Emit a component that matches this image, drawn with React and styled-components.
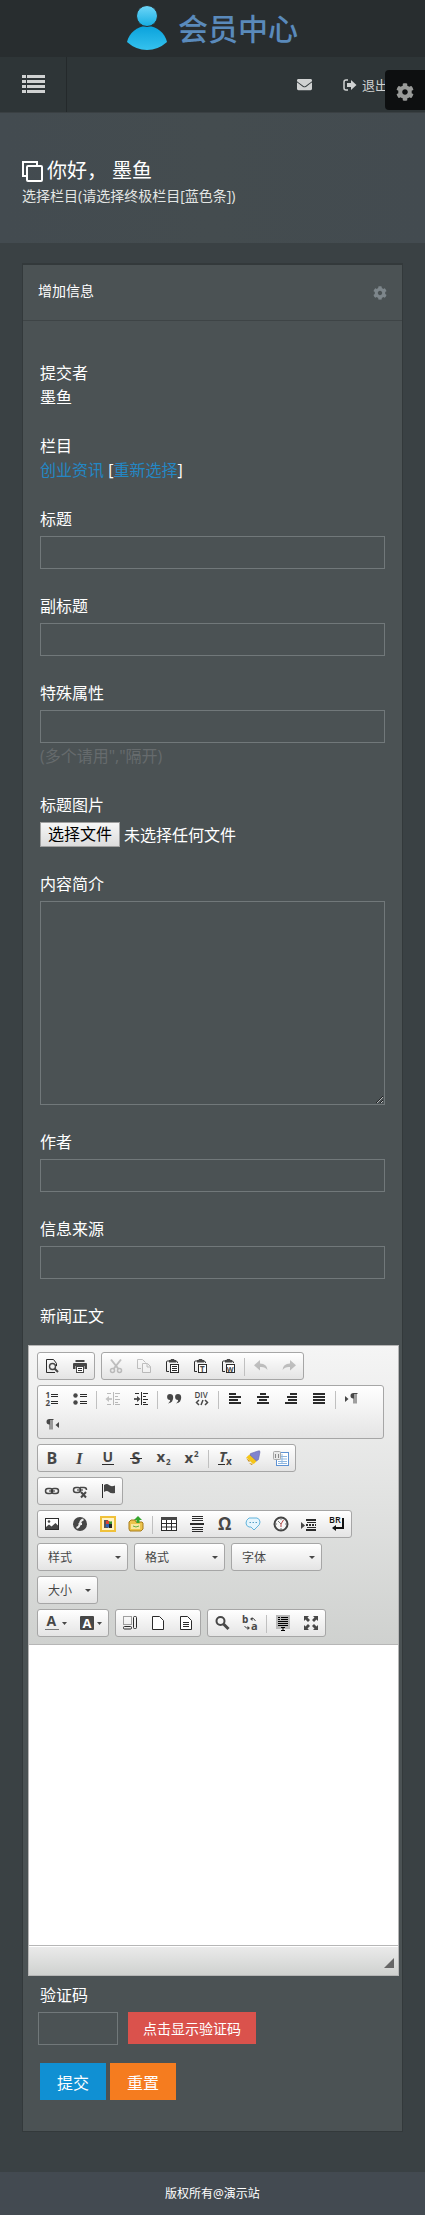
import React from 'react';
import styled, { createGlobalStyle } from 'styled-components';
import { FaCog, FaEnvelope } from 'react-icons/fa';

const GlobalStyle = createGlobalStyle`
  * {
    box-sizing: border-box;
  }
  body {
    margin: 0;
    background: #3a4144;
    color: #fff;
    font-family: "Open Sans", "Noto Sans CJK SC", sans-serif;
    font-size: 16px;
    line-height: 24px;
  }
  button, input, select, textarea {
    font-family: inherit;
    margin: 0;
  }
  svg {
    display: block;
    overflow: visible;
  }
`;

const Page = styled.div`
  position: relative;
`;

const LogoBar = styled.header`
  height: 57px;
  background: #282d2f;
  display: flex;
  justify-content: center;
`;

const LogoLink = styled.a`
  display: flex;
  align-items: center;
  gap: 11px;
  color: #5a8abb;
  font-size: 30px;
  line-height: 44px;
  font-weight: 500;
  text-decoration: none;
`;

const NavBar = styled.nav`
  height: 56px;
  background: #2e3537;
  border-bottom: 1px solid #3a4043;
  display: flex;
  align-items: stretch;
`;

const MenuButton = styled.button`
  width: 67px;
  padding: 0 0 2px;
  border: none;
  border-right: 1px solid #24292b;
  background: none;
  color: #d0d2d2;
  display: flex;
  align-items: center;
  justify-content: center;
`;

const NavLinks = styled.div`
  margin-left: auto;
  padding-right: 37px;
  display: flex;
  gap: 31px;
`;

const NavLink = styled.a`
  display: flex;
  align-items: center;
  gap: 5px;
  color: #d0d2d2;
  font-size: 13px;
  text-decoration: none;
`;

const SettingsButton = styled.button`
  position: absolute;
  top: 70px;
  right: 0;
  width: 40px;
  height: 40px;
  padding: 4px 0 0;
  border: none;
  border-radius: 4px 0 0 4px;
  background: #0d0f10;
  color: #999b99;
  display: flex;
  align-items: center;
  justify-content: center;
`;

const Hero = styled.section`
  height: 130px;
  padding: 44px 22px 0;
  background: linear-gradient(90deg, #434b50, #444c4f 50%, #434b50);
`;

const Greeting = styled.h2`
  margin: 0;
  display: flex;
  align-items: center;
  gap: 4px;
  font-size: 20px;
  line-height: 28px;
  font-weight: 400;
`;

const GreetingName = styled.span`
  margin-left: 1px;
`;

const Hint = styled.p`
  margin: 0;
  color: #e3e6e4;
  font-size: 14px;
  line-height: 22px;
`;

const Card = styled.main`
  margin: 20px 22px 40px;
  border: 1px solid #33393b;
  border-top-width: 2px;
  background: #4b5254;
`;

const CardHeader = styled.div`
  height: 56px;
  padding: 0 15px;
  border-bottom: 1px solid #3e4446;
  display: flex;
  align-items: center;
  justify-content: space-between;
  color: #7d868b;
`;

const CardTitle = styled.h3`
  margin: 0;
  padding-bottom: 4px;
  color: #fff;
  font-size: 14px;
  font-weight: 400;
`;

const Form = styled.form`
  padding: 40px 0 31px;
`;

const Field = styled.div`
  margin: 0 17px 25px;
`;

const Label = styled.label`
  display: block;
  margin-bottom: ${(props) => (props.$tight ? 0 : 5)}px;
`;

const BlueLink = styled.a`
  color: #2487c4;
  text-decoration: none;
`;

const TextInput = styled.input`
  display: block;
  width: ${(props) => (props.$small ? '80px' : '100%')};
  height: 33px;
  padding: 4px 8px;
  border: 1px solid #71787a;
  background: transparent;
  color: #fff;
`;

const TextArea = styled.textarea`
  display: block;
  width: 100%;
  height: 204px;
  padding: 4px 8px;
  border: 1px solid #71787a;
  background: transparent;
  color: #fff;
  resize: both;
`;

const Help = styled.div`
  padding-top: 1px;
  color: #666b6d;
`;

const FileRow = styled.div`
  display: flex;
  align-items: center;
  gap: 4px;
`;

const FileButton = styled.label`
  height: 25px;
  padding: 0 7px;
  border: 1px solid #a0a0a0;
  background: linear-gradient(#f6f6f6, #dcdcdc);
  color: #000;
  line-height: 23px;
`;

const HiddenFile = styled.input`
  position: absolute;
  width: 1px;
  height: 1px;
  opacity: 0;
`;

const EditorLabel = styled.label`
  display: block;
  margin: 0 17px;
`;

const Editor = styled.div`
  margin: 17px 3px 7px 5px;
  border: 1px solid #b6b6b6;
`;

const Toolbar = styled.div`
  padding: 6px 8px 2px;
  border-bottom: 1px solid #b6b6b6;
  background: linear-gradient(#f5f5f5, #cfd1cf);
`;

const ToolRow = styled.div`
  display: flex;
  flex-wrap: wrap;
`;

const ToolGroup = styled.div`
  max-width: calc(100% - 6px);
  margin: 0 6px 5px 0;
  border: 1px solid #a6a6a6;
  border-radius: 3px;
  background: linear-gradient(#fff, #e4e4e4);
  display: flex;
  flex-wrap: wrap;
`;

const ToolButton = styled.button`
  height: 26px;
  padding: 0 6px;
  border: none;
  background: none;
  display: flex;
  align-items: center;
  gap: 2px;
  opacity: ${(props) => (props.disabled ? 0.3 : 1)};
`;

const Separator = styled.span`
  width: 1px;
  height: 18px;
  margin: 5px 2px 3px;
  background: #c0c0c0;
`;

const Combo = styled.div`
  width: ${(props) => props.$width}px;
  height: 28px;
  margin: 0 6px 5px 0;
  border: 1px solid #a6a6a6;
  border-radius: 3px;
  background: linear-gradient(#fff, #e4e4e4);
  display: grid;
  align-items: center;
  &::after {
    content: '';
    grid-area: 1 / 1;
    justify-self: end;
    margin-right: 6px;
    border: 3px solid transparent;
    border-top-color: #474747;
    border-bottom-width: 0;
    pointer-events: none;
  }
`;

const ComboSelect = styled.select`
  grid-area: 1 / 1;
  width: 100%;
  height: 26px;
  padding: 0 0 0 10px;
  border: none;
  background: transparent;
  color: #474747;
  font-size: 12px;
  appearance: none;
`;

const EditorBody = styled.textarea`
  display: block;
  width: 100%;
  height: 300px;
  padding: 8px;
  border: none;
  background: #fff;
  color: #333;
  resize: none;
`;

const EditorFooter = styled.div`
  height: 30px;
  padding: 0 4px 7px;
  border-top: 1px solid #b6b6b6;
  box-shadow: inset 0 1px 0 #fff;
  background: linear-gradient(#ebebeb, #cfd1cf);
  display: flex;
  align-items: flex-end;
  justify-content: flex-end;
`;

const CaptchaField = styled.div`
  margin: 0 15px 18px;
`;

const CaptchaLabel = styled.label`
  display: block;
  margin: 0 2px 5px;
`;

const ButtonRow = styled.div`
  display: flex;
  align-items: flex-start;
  gap: ${(props) => props.$gap}px;
`;

const CaptchaButton = styled.button`
  height: 32px;
  padding: 0 15px;
  border: none;
  background: #da524c;
  color: #fff;
  font-size: 14px;
`;

const ActionButton = styled.button`
  height: 37px;
  padding: 0 17px;
  border: none;
  background: ${(props) => props.$color};
  color: #fff;
  font-size: 16px;
`;

const Actions = styled.div`
  margin: 0 17px;
`;

const Footer = styled.footer`
  height: 43px;
  background: #434a51;
  text-align: center;
  font-size: 12px;
  line-height: 43px;
`;

const ink = '#474747';

const line = (d, width = 1, color = '#2b2b2b') => (
  <path d={d} fill='none' stroke={color} strokeWidth={width} />
);

const letter = (text, x, y, size, extra) => (
  <text x={x} y={y} fontSize={size} fontWeight='700' fontFamily='"Open Sans", sans-serif' fill={ink} {...extra}>{text}</text>
);

const pasteBoard = (
  <>
    {line('M5 3H3.5Q2.5 3 2.5 4V13.5H5M11 3H12Q13.5 3 13.5 5')}
    <path d='M5 2H6.5L7 1H10L10.5 2H12V4.5H5Z' fill={ink} />
    <rect x='6.5' y='6.5' width='8' height='8' fill='#fff' stroke='#2b2b2b' />
  </>
);

const icons = {
  preview: (
    <>
      {line('M12.5 8V5.5L9.5 1.5H2.5V14.5H11')}
      <circle cx='8.5' cy='8.5' r='3' fill='none' stroke={ink} strokeWidth='1.4' />
      {line('M10.5 10.5L14 14', 2, ink)}
    </>
  ),
  print: (
    <>
      <path d='M3.5 2H12.5V4H3.5ZM1 6Q1 5 2 5H14Q15 5 15 6V11H12.5V8H3.5V11H1Z' fill={ink} />
      <rect x='4.5' y='8.5' width='7' height='6' fill='#fff' stroke={ink} />
      {line('M6 10.5H10M6 12.5H10')}
    </>
  ),
  cut: (
    <>
      {line('M3 1.5L10.5 11M13 1.5L5.5 11', 2, ink)}
      <circle cx='4.5' cy='12.5' r='2' fill='none' stroke={ink} strokeWidth='1.5' />
      <circle cx='11.5' cy='12.5' r='2' fill='none' stroke={ink} strokeWidth='1.5' />
    </>
  ),
  copy: (
    <>
      {line('M5 10.5H1.5V1.5H6.5L9.5 4.5', 1, ink)}
      <path d='M6.5 5.5H11.5L14.5 8.5V14.5H6.5ZM11 5.5V9H14.5' fill='#fff' stroke={ink} />
    </>
  ),
  paste: <>{pasteBoard}{line('M8 8.5H13M8 10.5H13M8 12.5H13')}</>,
  pasteText: <>{pasteBoard}{letter('T', 8, 13.5, 8)}</>,
  pasteWord: <>{pasteBoard}{letter('W', 6.8, 13.5, 7)}</>,
  undo: <path d='M7 2V5.5Q14 5.5 14.5 12Q12 8.5 7 9V12.5L1 7.2Z' fill={ink} />,
  redo: <path d='M9 2V5.5Q2 5.5 1.5 12Q4 8.5 9 9V12.5L15 7.2Z' fill={ink} />,
  ordered: (
    <>
      {letter('1', 1.5, 7, 8)}
      {letter('2', 1.5, 14.5, 8)}
      {line('M7 3.5H14M7 5.5H14M7 10.5H14M7 12.5H14')}
    </>
  ),
  bullets: (
    <>
      <circle cx='3.5' cy='4.5' r='2.2' fill={ink} />
      <circle cx='3.5' cy='11.5' r='2.2' fill={ink} />
      {line('M8 3.5H15M8 5.5H15M8 10.5H15M8 12.5H15')}
    </>
  ),
  outdent: (
    <>
      {line('M8.5 1V14M10 2.5H15M10 5.5H13M10 8.5H15M10 11.5H13M10 13.5H15M2 2.5H6M2 13.5H6')}
      {line('M2 8H7', 1.5)}
      <path d='M0.5 8L4 5V11Z' fill={ink} />
    </>
  ),
  indent: (
    <>
      {line('M8.5 1V14M10 2.5H15M10 5.5H13M10 8.5H15M10 11.5H13M10 13.5H15M2 2.5H6M2 13.5H6')}
      {line('M1 8H5', 1.5)}
      <path d='M7.5 8L4 5V11Z' fill={ink} />
    </>
  ),
  quote: (
    <path
      d='M4 3A3 3 0 1 0 4.2 9Q4 11 2 12.5Q7.5 11.5 7.2 6Q7 3 4 3ZM12 3A3 3 0 1 0 12.2 9Q12 11 10 12.5Q15.5 11.5 15.2 6Q15 3 12 3Z'
      fill={ink}
    />
  ),
  div: (
    <>
      {letter('DIV', 0.5, 7, 8, { fontWeight: 600 })}
      {line('M5 9L2.5 11.5L5 14M11 9L13.5 11.5L11 14M9 9L7 14', 1.5, ink)}
    </>
  ),
  left: line('M2 3H9M2 6H14M2 9H11M2 12H14', 2),
  center: line('M5 3H11M2 6H14M4 9H12M2 12H14', 2),
  right: line('M7 3H14M4 6H14M5 9H14M2 12H14', 2),
  justify: line('M2 3H14M2 6H14M2 9H14M2 12H14', 2),
  ltr: (
    <>
      <path d='M1 5L4.5 8L1 11Z' fill={ink} />
      <path d='M13.5 2H9.5Q6.5 2 6.5 4.8T9.5 7.5V12.5H10.5V3H11.5V12.5H12.5V3H13.5Z' fill={ink} />
    </>
  ),
  rtl: (
    <>
      <path d='M15 5L11.5 8L15 11Z' fill={ink} />
      <path d='M9.5 2H5.5Q2.5 2 2.5 4.8T5.5 7.5V12.5H6.5V3H7.5V12.5H8.5V3H9.5Z' fill={ink} />
    </>
  ),
  bold: letter('B', 2.5, 14, 16),
  italic: letter('I', 4, 14, 17, { fontStyle: 'italic', fontFamily: '"Liberation Serif", serif' }),
  underline: <>{letter('U', 2.5, 12, 14)}{line('M2 14.5H14')}</>,
  strike: <>{letter('S', 3.5, 14, 16)}{line('M2 8.5H14')}</>,
  sub: <>{letter('x', 0.5, 12, 15)}{letter('2', 10, 15, 8)}</>,
  sup: <>{letter('x', 0.5, 13, 15)}{letter('2', 10, 7, 8)}</>,
  removeFormat: (
    <>
      {letter('T', 2, 12, 14, { fontStyle: 'italic' })}
      {letter('x', 9, 15, 10)}
      {line('M1 14.5H8')}
    </>
  ),
  brush: (
    <>
      <path d='M2 8L8 14Q11 13 12 10L6 4Q3 5 1 8Z' fill='#f5c518' />
      <path d='M1 8L4 12L5 11M4 13L6.5 15L8 14' fill='#c78a10' />
      <path d='M5.5 3.5L13 1Q15 0 15 2L13.5 9.5L11.5 11L5 5Z' fill='#8083cf' stroke='#5c5eab' strokeWidth='0.5' />
    </>
  ),
  template: (
    <>
      <rect x='3.5' y='2.5' width='12' height='13' fill='#fff' stroke='#5e92d3' />
      {line('M5 6.5H14M5 9H14M5 11.5H14M5 13.5H14M9 4V14', 1, '#8fb7e0')}
      <rect x='0.5' y='1.5' width='7' height='8' rx='1' fill='#e9e9e9' stroke='#aaa' />
      {line('M2.5 4V8M5.5 4V8', 1, '#888')}
    </>
  ),
  link: (
    <>
      <rect x='1.5' y='5.5' width='7' height='5' rx='2.5' fill='none' stroke={ink} strokeWidth='1.5' />
      <rect x='7.5' y='5.5' width='7' height='5' rx='2.5' fill='none' stroke={ink} strokeWidth='1.5' />
      {line('M5 8H11', 1)}
    </>
  ),
  unlink: (
    <>
      <rect x='1.5' y='4.5' width='7' height='5' rx='2.5' fill='none' stroke={ink} strokeWidth='1.5' />
      <path d='M8 4.5H12Q14.5 4.5 14.5 7' fill='none' stroke={ink} strokeWidth='1.5' />
      {line('M5 7H11', 1)}
      {line('M9 9L14 14.5M14 9L9 14.5', 2, ink)}
    </>
  ),
  anchor: (
    <>
      {line('M2.5 1V15', 1)}
      <path d='M4 2Q7 0 9 2T15 2.5V10Q11 11 9 9T4 9Z' fill={ink} />
    </>
  ),
  image: (
    <>
      <rect x='1.5' y='2.5' width='13' height='11' fill='#fff' stroke='#2b2b2b' />
      <circle cx='5' cy='5.5' r='1.3' fill={ink} />
      <path d='M2 13V11L5 8.5L7.5 10.5L11.5 7L14 9.5V13Z' fill={ink} />
    </>
  ),
  flash: (
    <>
      <circle cx='8' cy='8' r='7' fill={ink} />
      {line('M11.5 3.5Q8.5 4 8 7.5T4.5 12M6.5 8H10', 2, '#eee')}
    </>
  ),
  media: (
    <>
      <rect x='1' y='1' width='14' height='14' fill='#fff3c4' stroke='#f0c13a' strokeWidth='2' />
      <rect x='4' y='4' width='4' height='8' fill='#555' />
      <path d='M6 5Q8 4 9 5V8H6Z' fill='#d43' />
      <path d='M9 5Q11 6 12 5V8H9Z' fill='#3a9a30' />
      <path d='M6 8H9V12Q8 11 6 11Z' fill='#2b62b8' />
      <path d='M9 8H12V12H9Z' fill='#222' />
    </>
  ),
  upload: (
    <>
      <path d='M1 6L3 4H7L8 6H14L15 7V13L13 15H2L1 13Z' fill='#ecc34c' stroke='#a97c1b' />
      <rect x='3' y='8' width='9' height='5' fill='#f9e7a0' />
      <path d='M10 0L14 4H11.5V7H8.5V4H6Z' fill='#35a52d' />
      {line('M5 10Q8 12 11 10', 1, '#65ae46')}
    </>
  ),
  table: (
    <>
      <rect x='0.5' y='1.5' width='15' height='13' fill='#fff' stroke='#2b2b2b' />
      <path d='M0 1H16V4H0Z' fill={ink} />
      {line('M5.5 4V14M10.5 4V14M1 7.5H15M1 11H15')}
    </>
  ),
  rule: <>{line('M3 0.5H14M3 2.5H14M3 4.5H14M3 11.5H14M3 13.5H14M3 15.5H14')}{line('M1 8H15', 2)}</>,
  omega: letter('Ω', 1, 14, 17),
  bubble: (
    <>
      <path d='M4 2H12Q15 3 15 6T12 11L9 14L6 11H4Q1 10 1 7T4 2Z' fill='#e5f5fd' stroke='#62b4dc' />
      {line('M4.5 6.5H6M7.5 6.5H9M10.5 6.5H12', 1, '#559fc5')}
    </>
  ),
  clock: (
    <>
      <circle cx='8' cy='8' r='6.5' fill='#f6f6f6' stroke='#444' strokeWidth='2' />
      {line('M8 2V4M8 12V14M2 8H4M12 8H14M5 5L8 8', 1, '#777')}
      {line('M10.5 4L8 8V11', 1, '#b44')}
    </>
  ),
  pageBreak: (
    <>
      <path d='M0 6L4 9.5L0 13Z' fill={ink} />
      {line('M5 4H15M5 14H15', 2)}
      {line('M6 6.5H15M6 11.5H15')}
      <path d='M5 9H15' stroke='#2b2b2b' strokeWidth='2' strokeDasharray='2 1' />
    </>
  ),
  br: (
    <>
      {letter('BR', 0, 7, 9, { fontWeight: 600, fill: '#111' })}
      {line('M14 2V12H6', 2, '#111')}
      <path d='M3 12L7 9V15Z' fill='#111' />
    </>
  ),
  textColor: <>{letter('A', 2.5, 11, 14)}{line('M1 14.5H15', 1, '#777')}</>,
  bgColor: <><rect x='1' y='1' width='14' height='14' rx='1' fill={ink} />{letter('A', 3.5, 13, 13, { fill: '#fff' })}</>,
  blocks: (
    <>
      <path d='M1.5 1.5H9.5V9.5H1.5Z' fill='none' stroke={ink} strokeDasharray='1 1' />
      <rect x='11.5' y='1.5' width='3' height='12' rx='1' fill='none' stroke='#2b2b2b' />
      <rect x='1.5' y='11.5' width='8' height='2.5' rx='1' fill='none' stroke='#2b2b2b' />
    </>
  ),
  newPage: <path d='M2.5 1.5H9.5L13.5 5.5V14.5H2.5Z' fill='#fff' stroke='#2b2b2b' />,
  source: (
    <>
      <path d='M2.5 1.5H9.5L13.5 5.5V14.5H2.5Z' fill='#fff' stroke='#2b2b2b' />
      {line('M5 7.5H11M5 9.5H11M5 11.5H11')}
    </>
  ),
  find: <><circle cx='6.5' cy='6' r='4' fill='none' stroke={ink} strokeWidth='2' />{line('M9.5 9L14.5 14', 3, ink)}</>,
  replace: (
    <>
      {letter('b', 0, 8, 10)}
      {letter('a', 9, 15, 11)}
      {line('M9 3.5Q12 2.5 13.5 6M7 13Q4 14 2.5 11', 1, ink)}
      <path d='M8 4L10.5 2V6ZM8 13L5.5 11V15Z' fill={ink} />
    </>
  ),
  selectAll: (
    <>
      <path d='M1 0H15V14H1Z' fill='#b9b9b9' />
      {line('M3 2.5H5M6 2.5H13M3 4.5H5M6 4.5H13M3 6.5H13M3 8.5H13M3 10.5H13', 1, '#000')}
      {line('M6 12.5H10M8 12.5V15M6 15.5H10', 1, '#000')}
    </>
  ),
  maximize: (
    <path
      d='M1 1H6L4.5 2.5L7 5L5 7L2.5 4.5L1 6ZM15 1H10L11.5 2.5L9 5L11 7L13.5 4.5L15 6ZM1 15H6L4.5 13.5L7 11L5 9L2.5 11.5L1 10ZM15 15H10L11.5 13.5L9 11L11 9L13.5 11.5L15 10Z'
      fill={ink}
    />
  ),
};

// '|' draws a separator inside a group
const firstTools = [
  [['preview', '预览'], ['print', '打印']],
  [['cut', '剪切', true], ['copy', '复制', true], ['paste', '粘贴'], ['pasteText', '粘贴为无格式文本'], ['pasteWord', '从 MS Word 粘贴'], '|', ['undo', '撤消', true], ['redo', '重做', true]],
  [['ordered', '编号列表'], ['bullets', '项目列表'], '|', ['outdent', '减少缩进量', true], ['indent', '增加缩进量'], '|', ['quote', '块引用'], ['div', '创建 DIV 容器'], '|', ['left', '左对齐'], ['center', '居中'], ['right', '右对齐'], ['justify', '两端对齐'], '|', ['ltr', '文字方向为从左至右'], ['rtl', '文字方向为从右至左']],
  [['bold', '加粗'], ['italic', '倾斜'], ['underline', '下划线'], ['strike', '删除线'], ['sub', '下标'], ['sup', '上标'], '|', ['removeFormat', '清除格式'], ['brush', '格式刷'], ['template', '模板']],
  [['link', '插入超链接'], ['unlink', '取消超链接'], ['anchor', '锚点']],
  [['image', '图像'], ['flash', 'Flash'], ['media', '多媒体'], ['upload', '附件'], '|', ['table', '表格'], ['rule', '水平线'], ['omega', '特殊符号'], ['bubble', '表情'], ['clock', '时间'], ['pageBreak', '分页符'], ['br', '换行']],
];

const lastTools = [
  [['textColor', '文本颜色', false, true], ['bgColor', '背景颜色', false, true]],
  [['blocks', '显示区块'], ['newPage', '新建'], ['source', '源码']],
  [['find', '查找'], ['replace', '替换'], '|', ['selectAll', '全选'], ['maximize', '全屏']],
];

const combos = [['样式', 91], ['格式', 91], ['字体', 91], ['大小', 61]];

function Tools ({ groups }) {
  return groups.map((group, index) => (
    <ToolGroup key={index}>
      {group.map((item, i) => {
        if (item === '|') return <Separator key={i} />;
        const [name, title, disabled, arrow] = item;
        return (
          <ToolButton key={name} type='button' aria-label={title} disabled={disabled}>
            <svg width='16' height='16' viewBox='0 0 16 16'>{icons[name]}</svg>
            {arrow && <svg width='5' height='3' viewBox='0 0 5 3'><path d='M0 0H5L2.5 3Z' fill={ink} /></svg>}
          </ToolButton>
        );
      })}
    </ToolGroup>
  ));
}

function LogoIcon () {
  return (
    <svg width='40' height='44' viewBox='0 0 40 44'>
      <defs>
        <linearGradient id='head' x1='0' y1='0' x2='0' y2='1'>
          <stop offset='0' stopColor='#6fd6f8' />
          <stop offset='1' stopColor='#14ade2' />
        </linearGradient>
        <linearGradient id='body' x1='0' y1='0' x2='0' y2='1'>
          <stop offset='0' stopColor='#0aa2dc' />
          <stop offset='1' stopColor='#35c2ee' />
        </linearGradient>
      </defs>
      <path d='M20 19C30 19 38 26 40 35Q31 43 20 43T0 35C2 26 10 19 20 19Z' fill='url(#body)' />
      <circle cx='20' cy='9' r='10.5' fill='url(#head)' stroke='#282d2f' strokeWidth='1' />
    </svg>
  );
}

function App () {
  return (
    <Page>
      <GlobalStyle />
      <LogoBar>
        <LogoLink href='#home'><LogoIcon />会员中心</LogoLink>
      </LogoBar>
      <NavBar>
        <MenuButton type='button' aria-label='菜单'>
          <svg width='23' height='18' viewBox='0 0 23 18'>
            <path
              d='M0 0H4V3H0ZM5 0H23V3H5ZM0 5H4V8H0ZM5 5H23V8H5ZM0 10H4V13H0ZM5 10H23V13H5ZM0 15H4V18H0ZM5 15H23V18H5Z'
              fill='currentColor'
            />
          </svg>
        </MenuButton>
        <NavLinks>
          <NavLink href='#message' aria-label='消息'><FaEnvelope size={15} /></NavLink>
          <NavLink href='#logout'>
            <svg width='14' height='12' viewBox='0 0 14 12'>
              <path d='M5 1H3Q1 1 1 3V9Q1 11 3 11H5' fill='none' stroke='currentColor' strokeWidth='1.5' />
              <path d='M4 4H8V1L13.5 6L8 11V8H4Z' fill='currentColor' />
            </svg>
            退出
          </NavLink>
        </NavLinks>
      </NavBar>
      <SettingsButton type='button' aria-label='设置'><FaCog size={18} /></SettingsButton>
      <Hero>
        <Greeting>
          <svg width='21' height='21' viewBox='0 0 21 21' fill='none' stroke='#fff' strokeWidth='2'>
            <path d='M4 15H1V1H15V4' />
            <rect x='5' y='5' width='15' height='15' rx='1' />
          </svg>
          你好， <GreetingName>墨鱼</GreetingName>
        </Greeting>
        <Hint>选择栏目(请选择终极栏目[蓝色条])</Hint>
      </Hero>
      <Card>
        <CardHeader>
          <CardTitle>增加信息</CardTitle>
          <FaCog size={14} />
        </CardHeader>
        <Form>
          <Field>
            <Label as='div' $tight>提交者</Label>
            墨鱼
          </Field>
          <Field>
            <Label as='div' $tight>栏目</Label>
            <BlueLink href='#column'>创业资讯</BlueLink> [<BlueLink href='#select'>重新选择</BlueLink>]
          </Field>
          <Field>
            <Label htmlFor='title'>标题</Label>
            <TextInput id='title' type='text' />
          </Field>
          <Field>
            <Label htmlFor='ftitle'>副标题</Label>
            <TextInput id='ftitle' type='text' />
          </Field>
          <Field>
            <Label htmlFor='keyboard'>特殊属性</Label>
            <TextInput id='keyboard' type='text' />
            <Help>(多个请用","隔开)</Help>
          </Field>
          <Field>
            <Label htmlFor='titlepic'>标题图片</Label>
            <FileRow>
              <HiddenFile id='titlepic' type='file' />
              <FileButton htmlFor='titlepic'>选择文件</FileButton>
              未选择任何文件
            </FileRow>
          </Field>
          <Field>
            <Label htmlFor='smalltext'>内容简介</Label>
            <TextArea id='smalltext' />
          </Field>
          <Field>
            <Label htmlFor='writer'>作者</Label>
            <TextInput id='writer' type='text' />
          </Field>
          <Field>
            <Label htmlFor='befrom'>信息来源</Label>
            <TextInput id='befrom' type='text' />
          </Field>
          <EditorLabel htmlFor='newstext'>新闻正文</EditorLabel>
          <Editor>
            <Toolbar>
              <ToolRow>
                <Tools groups={firstTools} />
                {combos.map(([name, width]) => (
                  <Combo key={name} $width={width}>
                    <ComboSelect aria-label={name}>
                      <option>{name}</option>
                    </ComboSelect>
                  </Combo>
                ))}
              </ToolRow>
              <ToolRow>
                <Tools groups={lastTools} />
              </ToolRow>
            </Toolbar>
            <EditorBody id='newstext' />
            <EditorFooter>
              <svg width='10' height='10' viewBox='0 0 10 10'><path d='M10 0V10H0Z' fill='#666' /></svg>
            </EditorFooter>
          </Editor>
          <CaptchaField>
            <CaptchaLabel htmlFor='key'>验证码</CaptchaLabel>
            <ButtonRow $gap={10}>
              <TextInput id='key' type='text' $small />
              <CaptchaButton type='button'>点击显示验证码</CaptchaButton>
            </ButtonRow>
          </CaptchaField>
          <Actions>
            <ButtonRow $gap={4}>
              <ActionButton type='submit' $color='#1090d3'>提交</ActionButton>
              <ActionButton type='reset' $color='#f57c1f'>重置</ActionButton>
            </ButtonRow>
          </Actions>
        </Form>
      </Card>
      <Footer>版权所有@演示站</Footer>
    </Page>
  );
}

export default App;
